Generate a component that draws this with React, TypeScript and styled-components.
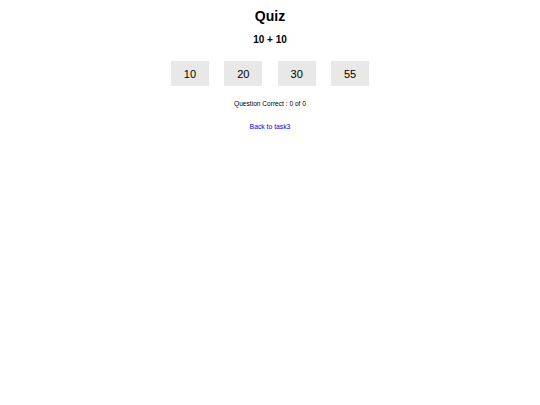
import styled, { createGlobalStyle } from 'styled-components'

const GlobalStyle = createGlobalStyle`
  body {
    margin: 0;
    background: #fff;
    font-family: 'Liberation Sans', Arial, sans-serif;
    color: #000;
  }
`

const options = [10, 20, 30, 55]

const App = () => {
  return (
    <>
      <GlobalStyle />
      <StyledPage>
        <StyledTitle>Quiz</StyledTitle>
        <StyledQuestion>10 + 10</StyledQuestion>
        <StyledOptions>
          {options.map((value) => (
            <StyledOption key={value}>{value}</StyledOption>
          ))}
        </StyledOptions>
        <StyledScore>Question Correct : 0 of 0</StyledScore>
        <StyledLink href="#">Back to task3</StyledLink>
      </StyledPage>
    </>
  )
}

export default App

const StyledPage = styled.div`
  display: flex;
  flex-direction: column;
  align-items: center;
  padding-top: 9px;
`

const StyledTitle = styled.h1`
  margin: 0;
  font-size: 14px;
  line-height: 14px;
  font-weight: bold;
`

const StyledQuestion = styled.h2`
  margin: 12px 0 0;
  font-size: 10px;
  line-height: 10px;
  font-weight: bold;
`

const StyledOptions = styled.div`
  display: flex;
  gap: 15.4px;
  margin-top: 16px;
`

const StyledOption = styled.button`
  width: 38px;
  height: 25px;
  padding: 0;
  border: none;
  background: #e8e8e8;
  font-family: 'Liberation Sans', Arial, sans-serif;
  font-size: 11px;
  color: #000;
  cursor: pointer;
`

const StyledScore = styled.p`
  margin: 14.75px 0 0;
  font-size: 6.6px;
  line-height: 6.6px;
`

const StyledLink = styled.a`
  margin-top: 16.3px;
  font-size: 6.8px;
  line-height: 6.8px;
  color: #0000ee;
  text-decoration: underline;
`
